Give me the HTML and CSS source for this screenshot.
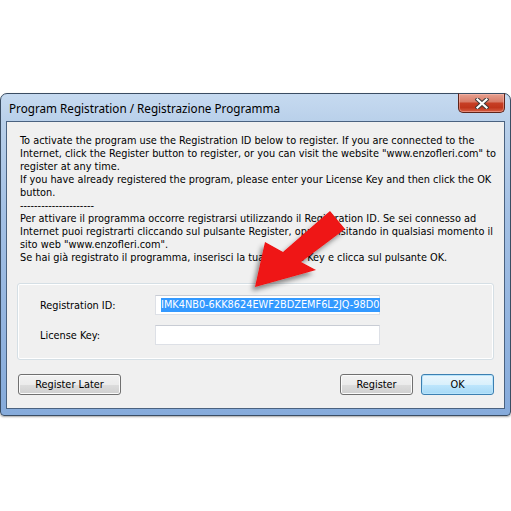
FILE: index.html
```html
<!DOCTYPE html>
<html lang="en">
<head>
<meta charset="utf-8">
<title>Program Registration</title>
<link rel="stylesheet" href="styles.css">
</head>
<body>
<div class="stage">
  <div class="window">
    <div class="titlebar">
      <span class="title">Program Registration / Registrazione Programma</span>
      <div class="close">
        <svg width="14" height="11" viewBox="0 0 14 11">
          <path d="M2.5 1.5 L11.5 9.5 M11.5 1.5 L2.5 9.5" stroke="#3b3b3b" stroke-width="4.2" stroke-linecap="square" fill="none"/>
          <path d="M2.5 1.5 L11.5 9.5 M11.5 1.5 L2.5 9.5" stroke="#ffffff" stroke-width="2.2" stroke-linecap="square" fill="none"/>
        </svg>
      </div>
    </div>
    <div class="client">
      <p class="msg">To activate the program use the Registration ID below to register. If you are connected to the<br>Internet, click the Register button to register, or you can visit the website "www.enzofleri.com" to<br>register at any time.<br>If you have already registered the program, please enter your License Key and then click the OK<br>button.<br>---------------------<br>Per attivare il programma occorre registrarsi utilizzando il Registration ID. Se sei connesso ad<br>Internet puoi registrarti cliccando sul pulsante Register, oppure visitando in qualsiasi momento il<br>sito web "www.enzofleri.com".<br>Se hai già registrato il programma, inserisci la tua License Key e clicca sul pulsante OK.</p>
      <div class="group">
        <div class="row">
          <span class="label">Registration ID:</span>
          <div class="field"><span class="sel">IMK4NB0-6KK8624EWF2BDZEMF6L2JQ-98D0</span></div>
        </div>
        <div class="row">
          <span class="label">License Key:</span>
          <div class="field"></div>
        </div>
      </div>
      <div class="buttons">
        <button class="btn later">Register Later</button>
        <span class="spacer"></span>
        <button class="btn">Register</button>
        <button class="btn default">OK</button>
      </div>
    </div>
  </div>
  <svg class="arrow" width="511" height="511" viewBox="0 0 511 511">
    <defs>
      <filter id="sh" x="-20%" y="-20%" width="140%" height="140%">
        <feDropShadow dx="-3" dy="4" stdDeviation="2.5" flood-color="#000" flood-opacity="0.45"/>
      </filter>
    </defs>
    <polygon points="255,287 316,270 301,262 345,229 330,211 283,252 265,242" fill="#ef1212" filter="url(#sh)"/>
  </svg>
</div>
</body>
</html>
```
FILE: styles.css
```css
html, body {
  margin: 0;
  padding: 0;
  background: #ffffff;
}

.stage {
  position: relative;
  width: 511px;
  height: 511px;
  padding-top: 93px;
  box-sizing: border-box;
  overflow: hidden;
}

.window {
  width: 511px;
  box-sizing: border-box;
  border: 1px solid #3a4d63;
  border-radius: 7px 7px 4px 4px;
  padding: 0 5px 6px 5px;
  background: linear-gradient(to bottom, #c6daf0 0px, #b9d0ea 28px, #a3c0e4 120px, #86abdb 100%);
  box-shadow: 0 1px 2px rgba(0,0,0,0.35);
}

.titlebar {
  height: 27px;
  display: flex;
  align-items: center;
}

.title {
  padding-left: 3px;
  font-family: "Noto Sans", "DejaVu Sans", sans-serif;
  font-size: 11.7px;
  color: #000;
  white-space: nowrap;
}

.close {
  margin-left: auto;
  align-self: flex-start;
  margin-top: -1px;
  width: 47px;
  height: 20px;
  box-sizing: border-box;
  border: 1px solid #5e241a;
  border-top-color: #3a4d63;
  border-radius: 0 0 5px 5px;
  background: linear-gradient(to bottom, #e6a090 0%, #d97c68 42%, #c63e24 52%, #c0351b 75%, #d65f44 100%);
  box-shadow: inset 0 0 0 1px rgba(255,200,190,0.45);
  display: flex;
  align-items: center;
  justify-content: center;
}

.close svg {
  display: block;
}

.client {
  border: 1px solid #4a6280;
  background: #f0f0f0;
  padding: 12px 10px 13px 10px;
  font-family: "DejaVu Sans Condensed", "DejaVu Sans", sans-serif;
  font-stretch: condensed;
  font-size: 10.85px;
  color: #000;
}

.msg {
  margin: 0 0 19px 3px;
  line-height: 13px;
  white-space: nowrap;
}

.group {
  border: 1px solid #d5dfe5;
  border-radius: 3px;
  box-shadow: inset 0 0 0 1px #ffffff;
  padding: 11px 0 14px 22px;
  display: flex;
  flex-direction: column;
  gap: 10px;
}

.row {
  display: flex;
  align-items: center;
  height: 20px;
}

.label {
  width: 115px;
  flex: none;
}

.field {
  width: 225px;
  height: 20px;
  box-sizing: border-box;
  border: 1px solid #dde0e6;
  border-top-color: #c8ccd4;
  background: #ffffff;
  padding-left: 5px;
  display: flex;
  align-items: center;
}

.sel {
  background: #3399ff;
  color: #ffffff;
  line-height: 14px;
  white-space: nowrap;
}

.buttons {
  margin-top: 14px;
  display: flex;
  align-items: center;
  gap: 8px;
}

.spacer {
  flex: 1;
}

.btn {
  height: 21px;
  width: 73px;
  box-sizing: border-box;
  border: 1px solid #707070;
  border-radius: 3px;
  background: linear-gradient(to bottom, #f2f2f2 0%, #ebebeb 50%, #dddddd 50%, #cfcfcf 100%);
  box-shadow: inset 0 0 0 1px #fbfbfb;
  font-family: inherit;
  font-stretch: inherit;
  font-size: inherit;
  color: #000;
  padding: 0;
  margin: 0;
}

.later {
  width: 103px;
  margin-left: 1px;
}

.default {
  border-color: #3c7fb1;
  background: linear-gradient(to bottom, #eaf6fd 0%, #d9f0fc 50%, #bee6fd 50%, #a7d9f5 100%);
  box-shadow: inset 0 0 0 1px #b8e4fb;
}

.arrow {
  position: absolute;
  left: 0;
  top: 0;
  pointer-events: none;
}
```
